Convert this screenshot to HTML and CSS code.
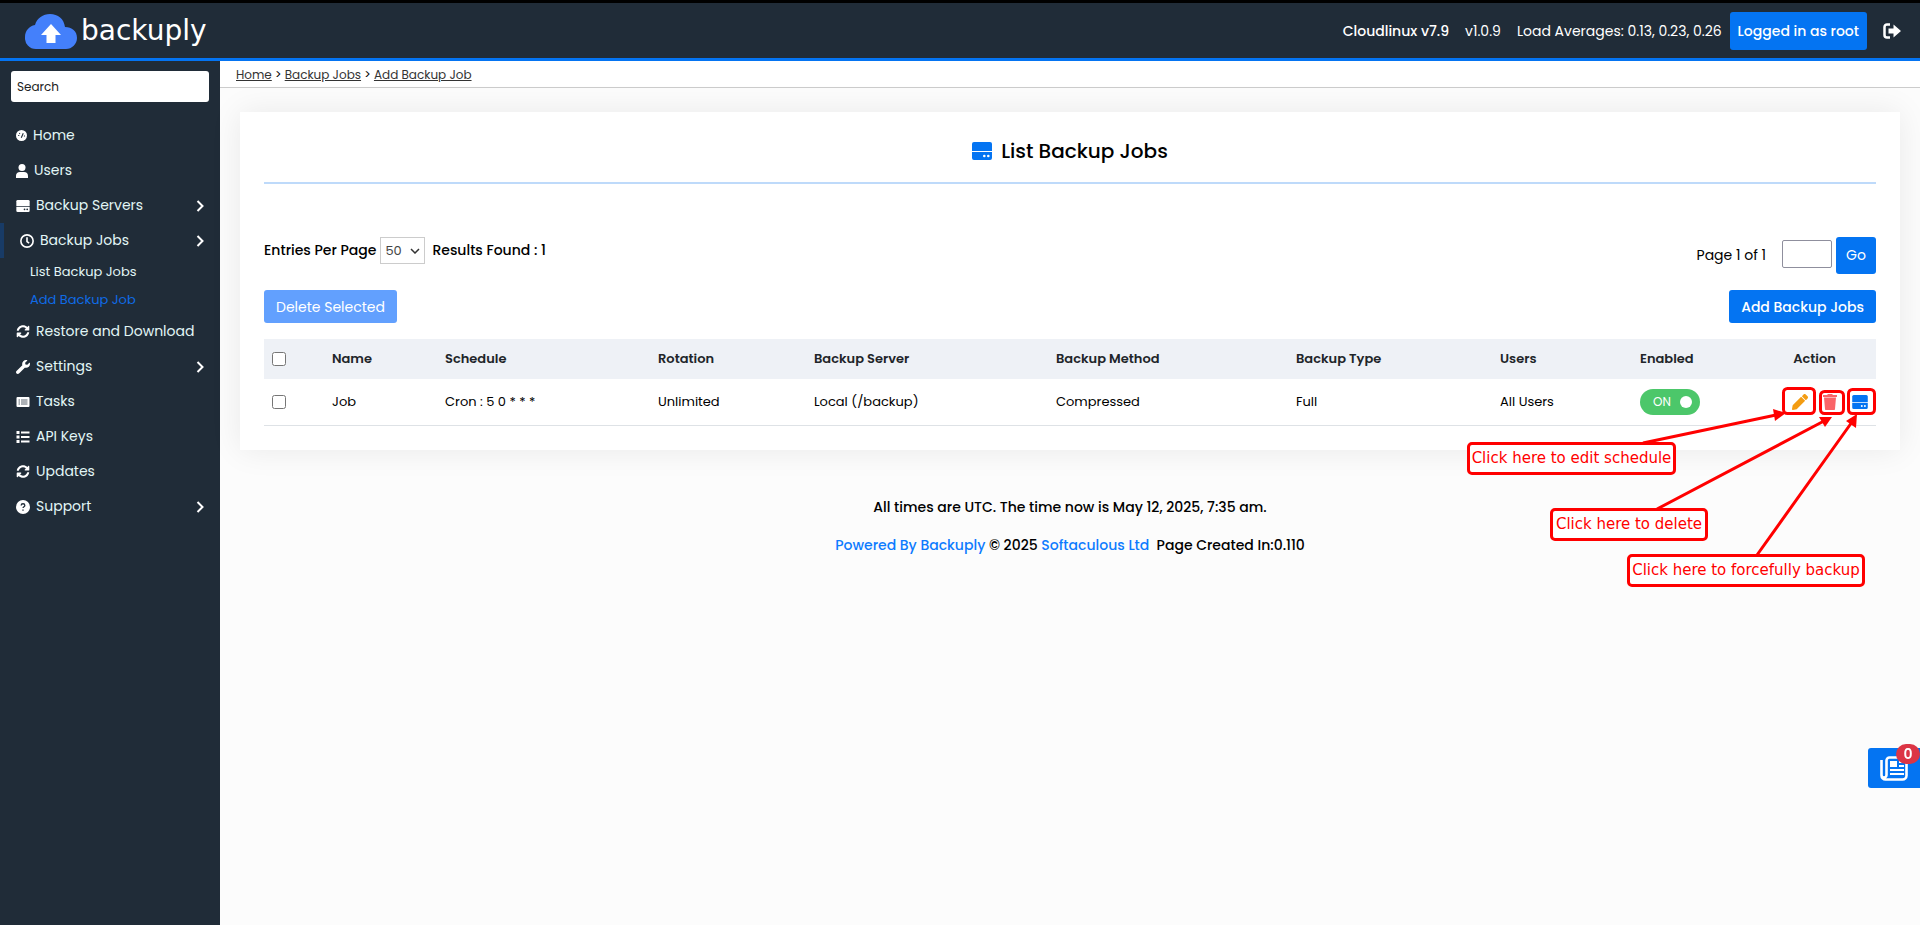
FILE: index.html
```html
<!DOCTYPE html>
<html lang="en">
<head>
  <meta charset="UTF-8">
  <meta name="viewport" content="width=device-width, initial-scale=1">
  <title>List Backup Jobs</title>
  <link rel="stylesheet" href="styles.css">
</head>
<body>

  <!-- icon sprite -->
  <svg class="sprite" aria-hidden="true">
    <symbol id="i-hdd" viewBox="0 0 20 18">
      <path d="M2 0h16a2 2 0 0 1 2 2v7H0V2a2 2 0 0 1 2-2z"/>
      <path fill-rule="evenodd" d="M0 10h20v6a2 2 0 0 1-2 2H2a2 2 0 0 1-2-2zM11 14a1.300 1.300 0 1 0 2.600 0 1.300 1.300 0 1 0-2.600 0zM15 14a1.300 1.300 0 1 0 2.600 0 1.300 1.300 0 1 0-2.600 0z"/>
    </symbol>
    <symbol id="i-sync" viewBox="0 0 512 512">
      <path d="M370.700 133.300C339.500 104 298.900 88 255.800 88c-77.500.1-144.300 53.200-162.800 126.900-1.300 5.400-6.100 9.100-11.700 9.100H24.100c-7.500 0-13.200-6.800-11.800-14.200C33.900 94.900 134.800 8 256 8c66.400 0 126.800 26.100 171.300 68.700L463 41c15.100-15.100 41-4.400 41 17v134c0 13.300-10.700 24-24 24H346c-21.400 0-32.100-25.900-17-41zM32 296h134c21.400 0 32.100 25.900 17 41l-41.800 41.800c31.300 29.300 71.800 45.300 114.900 45.300 77.400-.1 144.300-53.100 162.800-126.900 1.300-5.400 6.100-9.100 11.700-9.100h57.300c7.500 0 13.200 6.800 11.800 14.200C478.100 417.100 377.200 504 256 504c-66.400 0-126.800-26.100-171.300-68.700L49 471c-15.100 15.100-41 4.400-41-17V320c0-13.300 10.700-24 24-24z"/>
    </symbol>
    <symbol id="i-chevron" viewBox="0 0 8 12">
      <path d="M1.500 1l5 5-5 5" fill="none" stroke="currentColor" stroke-width="2"/>
    </symbol>
  </svg>

  <header class="topbar">
    <a class="logo" href="#">
      <svg class="logo-cloud" viewBox="0 0 52 35" aria-hidden="true">
        <path fill="#4480fb" d="M11 35a11 11 0 0 1-11-12c0-6 4-11 10-12C12 4 18 0 25 0c8 0 14 5 15 13 7 0 12 4 12 11 0 6-5 11-11 11z"/>
        <path fill="#fff" d="M26 10l10 11h-5.500v8h-9v-8H16z"/>
      </svg>
      <span>backuply</span>
    </a>
    <div class="topbar-info">
      <strong>Cloudlinux v7.9</strong>
      <span>v1.0.9</span>
      <span>Load Averages: 0.13, 0.23, 0.26</span>
    </div>
    <button class="btn user-btn" type="button">Logged in as root</button>
    <a class="logout" href="#" aria-label="Logout">
      <svg viewBox="0 0 18 16">
        <path d="M7 1.500H4A2.500 2.500 0 0 0 1.500 4v8A2.500 2.500 0 0 0 4 14.500h3" fill="none" stroke="currentColor" stroke-width="2.500"/>
        <path fill="currentColor" d="M5.500 5.500h5v-4L18 8l-7.500 6.500v-4h-5z"/>
      </svg>
    </a>
  </header>

  <div class="layout">
    <aside class="sidebar">
      <input class="search" type="text" placeholder="Search" aria-label="Search">
      <nav class="menu">
        <a class="menu-item" href="#">
          <svg width="11" height="11" viewBox="0 0 10 10"><circle cx="5" cy="5" r="5"/><path d="M4.800 7l1.800-4M2 5h1M3 2.800l.6.600M7.200 5.500h1" stroke="#202c38" fill="none"/></svg>
          <span>Home</span>
        </a>
        <a class="menu-item" href="#">
          <svg width="12" height="14" viewBox="0 0 12 14"><circle cx="6" cy="3.500" r="3.500"/><path d="M0 14v-2c0-2.500 1.500-4 4-4h4c2.500 0 4 1.500 4 4v2z"/></svg>
          <span>Users</span>
        </a>
        <a class="menu-item" href="#">
          <svg width="14" height="12"><use href="#i-hdd"/></svg>
          <span>Backup Servers</span>
          <svg class="chevron" width="8" height="12"><use href="#i-chevron"/></svg>
        </a>
        <a class="menu-item active" href="#">
          <svg width="14" height="14" viewBox="0 0 13 13"><g fill="none" stroke="currentColor" stroke-width="1.500"><circle cx="6.500" cy="6.500" r="5.700"/><path d="M6.500 3v4l2 1.500"/></g></svg>
          <span>Backup Jobs</span>
          <svg class="chevron" width="8" height="12"><use href="#i-chevron"/></svg>
        </a>
        <div class="submenu">
          <a href="#">List Backup Jobs</a>
          <a class="current" href="#">Add Backup Job</a>
        </div>
        <a class="menu-item" href="#">
          <svg width="14" height="13"><use href="#i-sync"/></svg>
          <span>Restore and Download</span>
        </a>
        <a class="menu-item" href="#">
          <svg width="14" height="14" viewBox="0 0 512 512"><path d="M507.700 109.100c-2.200-9-13.500-12.100-20.100-5.500l-74.400 74.400-67.900-11.300L334 98.800l74.400-74.400c6.600-6.600 3.400-17.900-5.700-20.200-47.400-11.700-99.600.9-136.600 37.900-39.600 39.600-50.500 97.100-34.100 147.200L18.700 402.800c-25 25-25 65.500 0 90.500s65.500 25 90.500 0l213.200-213.200c50.100 16.700 107.500 5.700 147.400-34.200 37.100-37.100 49.700-89.300 37.900-136.800z"/></svg>
          <span>Settings</span>
          <svg class="chevron" width="8" height="12"><use href="#i-chevron"/></svg>
        </a>
        <a class="menu-item" href="#">
          <svg width="14" height="10" viewBox="0 0 13 10"><rect width="13" height="10" rx="1"/><path d="M2 3h1.500M2 5h1.500M2 7h1.500M4.500 3H11M4.500 5H11M4.500 7H11" stroke="#5b656e" fill="none"/></svg>
          <span>Tasks</span>
        </a>
        <a class="menu-item" href="#">
          <svg width="14" height="12" viewBox="0 0 13 12"><path d="M0 0h3v3H0zM0 4.500h3v3H0zM0 9h3v3H0zM4.500.5H13v2H4.500zM4.500 5H13v2H4.500zM4.500 9.500H13v2H4.500z"/></svg>
          <span>API Keys</span>
        </a>
        <a class="menu-item" href="#">
          <svg width="14" height="13"><use href="#i-sync"/></svg>
          <span>Updates</span>
        </a>
        <a class="menu-item" href="#">
          <svg width="14" height="14" viewBox="0 0 13 13"><circle cx="6.500" cy="6.500" r="6.500"/><path d="M4.800 5c0-2 3.400-2 3.400 0 0 1.300-1.700 1.200-1.700 2.500M6.500 8.800v1.200" stroke="#202c38" stroke-width="1.200" fill="none"/></svg>
          <span>Support</span>
          <svg class="chevron" width="8" height="12"><use href="#i-chevron"/></svg>
        </a>
      </nav>
    </aside>

    <main class="main">
      <nav class="breadcrumb">
        <a href="#">Home</a> &gt; <a href="#">Backup Jobs</a> &gt; <a href="#">Add Backup Job</a>
      </nav>

      <section class="card">
        <h1 class="card-title">
          <svg width="20" height="18"><use href="#i-hdd"/></svg>
          <span>List Backup Jobs</span>
        </h1>

        <div class="pager">
          <div class="entries">
            <label for="per-page">Entries Per Page</label>
            <select id="per-page"><option>50</option><option>100</option></select>
            <span>Results Found : 1</span>
          </div>
          <form class="goto">
            <label for="page-no">Page 1 of 1</label>
            <input id="page-no" type="text">
            <button class="btn go-btn" type="button">Go</button>
          </form>
        </div>

        <div class="toolbar">
          <button class="btn" type="button" disabled>Delete Selected</button>
          <button class="btn add-btn" type="button">Add Backup Jobs</button>
        </div>

        <table class="jobs">
          <colgroup>
            <col class="c-check"><col class="c-name"><col class="c-schedule"><col class="c-rotation"><col class="c-server">
            <col class="c-method"><col class="c-type"><col class="c-users"><col class="c-enabled"><col>
          </colgroup>
          <thead>
            <tr>
              <th><input type="checkbox" aria-label="Select all"></th>
              <th>Name</th>
              <th>Schedule</th>
              <th>Rotation</th>
              <th>Backup Server</th>
              <th>Backup Method</th>
              <th>Backup Type</th>
              <th>Users</th>
              <th>Enabled</th>
              <th class="action-head">Action</th>
            </tr>
          </thead>
          <tbody>
            <tr>
              <td><input type="checkbox" aria-label="Select Job"></td>
              <td>Job</td>
              <td>Cron : 5 0 * * *</td>
              <td>Unlimited</td>
              <td>Local (/backup)</td>
              <td>Compressed</td>
              <td>Full</td>
              <td>All Users</td>
              <td>
                <label class="switch"><input type="checkbox" aria-label="Enabled" checked><span>ON</span></label>
              </td>
              <td>
                <div class="actions">
                  <button class="edit" type="button" aria-label="Edit">
                    <svg width="16" height="16" viewBox="0 0 512 512"><path d="M497.900 142.100l-46.100 46.100c-4.700 4.700-12.300 4.700-17 0l-111-111c-4.700-4.700-4.700-12.300 0-17l46.100-46.100c18.700-18.700 49.100-18.700 67.900 0l60.100 60.100c18.800 18.700 18.800 49.100 0 67.900zM284.200 99.800L21.600 362.400.4 483.900c-2.900 16.400 11.400 30.600 27.800 27.800l121.500-21.300 262.600-262.600c4.700-4.700 4.700-12.300 0-17l-111-111c-4.800-4.700-12.400-4.700-17.100 0z"/></svg>
                  </button>
                  <button class="delete" type="button" aria-label="Delete">
                    <svg width="14" height="16" viewBox="0 0 14 16"><path d="M0 1h4l1-1h4l1 1h4v2H0zM1 3.500h12L12 15c0 .6-.4 1-1 1H3c-.6 0-1-.4-1-1z"/></svg>
                  </button>
                  <button class="run" type="button" aria-label="Backup now">
                    <svg width="16" height="14"><use href="#i-hdd"/></svg>
                  </button>
                </div>
              </td>
            </tr>
          </tbody>
        </table>

        <!-- help notes over the action icons, drawn from the card's top right corner -->
        <div class="notes">
          <svg class="note-lines" width="440" height="480" viewBox="0 0 440 480" aria-hidden="true">
            <g fill="none" stroke="#f00" stroke-width="3">
              <rect x="323.500" y="276.500" width="31" height="25" rx="4"/>
              <rect x="360.500" y="279.500" width="23" height="22" rx="4"/>
              <rect x="388.500" y="277.500" width="26" height="24" rx="4"/>
              <path d="M183 331L316 303M197 397L364 309M297 443L392 310"/>
            </g>
            <g fill="#f00">
              <path d="M326 301l-13-4 2 12z"/>
              <path d="M372 305h-13l6 10z"/>
              <path d="M397 302l-11 7 10 7z"/>
            </g>
          </svg>
          <span class="note note-edit">Click here to edit schedule</span>
          <span class="note note-delete">Click here to delete</span>
          <span class="note note-run">Click here to forcefully backup</span>
        </div>
      </section>

      <footer class="footer">
        <p>All times are UTC. The time now is May 12, 2025, 7:35 am.</p>
        <p><a href="#">Powered By Backuply</a> © 2025 <a href="#">Softaculous Ltd</a> &nbsp;Page Created In:0.110</p>
      </footer>
    </main>
  </div>

  <button class="news" type="button" aria-label="News">
    <svg width="28" height="25" viewBox="0 0 28 25">
      <path d="M1.500 4v15.500a4 4 0 0 0 4 4h17a4 4 0 0 0 4-4V4.500a3 3 0 0 0-3-3H9.500a3 3 0 0 0-3 3V19a2.500 2.500 0 0 1-5 0" fill="none" stroke="#fff" stroke-width="2.600"/>
      <path d="M10 5h7v6h-7zM19 5h5v2h-5zM19 9h5v2h-5zM10 13h14v2H10zM10 17h14v2H10z" fill="#fff"/>
    </svg>
    <span class="news-badge">0</span>
  </button>

</body>
</html>
```
FILE: styles.css
```css
* {
  box-sizing: border-box;
}

body {
  margin: 0;
  min-height: 100vh;
  display: flex;
  flex-direction: column;
  background: #fcfcfc;
  color: #000;
  font-family: "Poppins", "Inter", "Liberation Sans", sans-serif;
  font-size: 14px;
}

a {
  color: inherit;
  text-decoration: none;
}

button, input, select {
  font: inherit;
}

button {
  cursor: pointer;
}

.sprite {
  position: absolute;
  width: 0;
  height: 0;
}

/* top bar */
.topbar {
  display: flex;
  align-items: center;
  height: 61px;
  padding: 1px 19px 0 25px;
  background: #202c38;
  border-top: 3px solid #000;
  border-bottom: 3px solid #0474f2;
  color: #fff;
}

.logo {
  display: flex;
  align-items: center;
  gap: 4px;
  margin-right: auto;
  font-family: "DejaVu Sans", sans-serif;
  font-size: 28px;
  line-height: 36px;
}

.logo-cloud {
  width: 52px;
  height: 35px;
}

.topbar-info {
  display: flex;
  gap: 16px;
  margin-right: 8px;
}

.topbar-info strong {
  font-weight: 500;
}

.btn {
  height: 33px;
  padding: 1px 12px 0;
  border: 0;
  border-radius: 3px;
  background: #0474f2;
  color: #fff;
  font-weight: 400;
}

.btn:disabled {
  background: #62a0fe;
}

.user-btn {
  height: 38px;
  padding: 0 8px;
  font-weight: 500;
}

.logout {
  display: flex;
  margin-left: 16px;
}

.logout svg {
  width: 18px;
  height: 16px;
}

/* sidebar */
.layout {
  flex: 1;
  display: flex;
}

.sidebar {
  width: 220px;
  flex: none;
  padding-top: 10px;
  background: #202c38;
  color: #e2f6f6;
}

.search {
  display: block;
  width: 198px;
  height: 31px;
  margin: 0 auto 16px;
  padding: 0 6px;
  border: 0;
  border-radius: 3px;
  background: #fff;
  font-size: 12px;
}

.search::placeholder {
  color: #222;
}

.menu-item {
  display: flex;
  align-items: center;
  gap: 6px;
  height: 35px;
  padding: 0 16px;
}

.menu-item svg {
  fill: #fff;
  color: #fff;
}

.menu-item .chevron {
  margin-left: auto;
}

.menu-item.active {
  border-left: 4px solid #183b66;
}

.submenu a {
  display: block;
  padding-left: 30px;
  font-size: 13px;
  line-height: 28px;
}

.submenu .current {
  color: #0f6be6;
}

/* content */
.main {
  flex: 1;
  min-width: 0;
}

.breadcrumb {
  height: 27px;
  padding-left: 16px;
  background: #fff;
  border-bottom: 1px solid #ccc;
  font-size: 12px;
  line-height: 27px;
}

.breadcrumb a {
  color: #333;
  text-decoration: underline;
}

.card {
  position: relative;
  margin: 24px 20px 0;
  padding: 24px;
  background: #fff;
  box-shadow: 0 0 30px rgba(0, 0, 0, 0.08);
}

.card-title {
  display: flex;
  align-items: center;
  justify-content: center;
  gap: 9px;
  height: 48px;
  margin: 0 0 53px;
  padding-bottom: 16px;
  border-bottom: 2px solid #bedafa;
  font-size: 20px;
  font-weight: 500;
}

.card-title svg {
  fill: #0474f2;
}

.pager,
.toolbar {
  display: flex;
  justify-content: space-between;
  align-items: flex-start;
  margin-bottom: 16px;
}

.entries {
  display: flex;
  align-items: center;
  gap: 4px;
  font-weight: 500;
}

.entries select {
  appearance: none;
  width: 45px;
  height: 27px;
  margin-right: 3px;
  padding: 0 4px;
  border: 1px solid #ccc;
  background: #fff url("data:image/svg+xml,%3Csvg xmlns='http://www.w3.org/2000/svg' width='10' height='6'%3E%3Cpath d='M1 1l4 4 4-4' fill='none' stroke='%23333' stroke-width='1.500'/%3E%3C/svg%3E") no-repeat right 4px center;
  color: #444;
  font-size: 13px;
  font-weight: 400;
}

.goto {
  display: flex;
  align-items: center;
  gap: 4px;
}

.goto label {
  margin-right: 12px;
}

.goto input {
  width: 50px;
  height: 28px;
  margin-bottom: 3px;
  border: 1px solid #8f8f9d;
  border-radius: 2px;
}

.go-btn {
  width: 40px;
  height: 37px;
  padding: 0;
}

.add-btn {
  font-weight: 500;
}

.jobs {
  width: 100%;
  table-layout: fixed;
  border-collapse: collapse;
  font-size: 13px;
}

.c-check { width: 60px; }
.c-name { width: 113px; }
.c-schedule { width: 213px; }
.c-rotation { width: 156px; }
.c-server { width: 242px; }
.c-method { width: 240px; }
.c-type { width: 204px; }
.c-users { width: 140px; }
.c-enabled { width: 121px; }

.jobs th,
.jobs td {
  padding: 0 8px;
  text-align: left;
}

.jobs th {
  height: 40px;
  background: #eef1f6;
  color: #212529;
  font-weight: 600;
}

.jobs td {
  height: 46px;
  border-bottom: 1px solid #dee2e6;
}

.jobs .action-head {
  text-align: center;
}

.jobs input[type="checkbox"] {
  display: block;
  width: 14px;
  height: 14px;
  margin: 0;
}

.switch {
  display: flex;
  align-items: center;
  justify-content: space-between;
  width: 60px;
  height: 26px;
  padding: 0 8px 0 13px;
  border-radius: 13px;
  background: #4cc76a;
  color: #fff;
  font-size: 12px;
}

.jobs .switch input {
  appearance: none;
  order: 1;
  width: 12px;
  height: 12px;
  border-radius: 50%;
  background: #fff;
}

.actions {
  display: flex;
  justify-content: flex-end;
  align-items: center;
  gap: 15px;
}

.actions button {
  display: flex;
  padding: 0;
  border: 0;
  background: none;
}

.edit { fill: #f39c12; }
.delete { fill: #fa6468; }
.run { fill: #0474f2; }

/* help notes */
.notes {
  position: absolute;
  top: 0;
  right: 0;
  width: 440px;
  height: 480px;
  pointer-events: none;
}

.note-lines {
  position: absolute;
  top: 0;
  left: 0;
}

.note {
  position: absolute;
  height: 33px;
  border: 3px solid #f00;
  border-radius: 5px;
  background: #fff;
  color: #f00;
  font-family: "DejaVu Sans", sans-serif;
  font-size: 15px;
  line-height: 27px;
  text-align: center;
  white-space: nowrap;
}

.note-edit {
  top: 330px;
  left: 7px;
  width: 209px;
}

.note-delete {
  top: 396px;
  left: 90px;
  width: 158px;
}

.note-run {
  top: 442px;
  left: 167px;
  width: 238px;
}

.footer {
  padding-top: 38px;
  text-align: center;
  font-weight: 500;
}

.footer p {
  margin: 0;
  line-height: 38px;
}

.footer a {
  color: #0d7bff;
}

/* news button */
.news {
  position: fixed;
  right: 0;
  bottom: 137px;
  width: 52px;
  height: 40px;
  padding: 0 0 0 12px;
  border: 0;
  border-radius: 3px 0 0 3px;
  background: #0474f2;
  text-align: left;
}

.news svg {
  display: block;
}

.news-badge {
  position: absolute;
  top: -4px;
  right: 0;
  width: 24px;
  height: 20px;
  border-radius: 10px;
  background: #dc3545;
  color: #fff;
  font-weight: 600;
  line-height: 20px;
  text-align: center;
}
```
